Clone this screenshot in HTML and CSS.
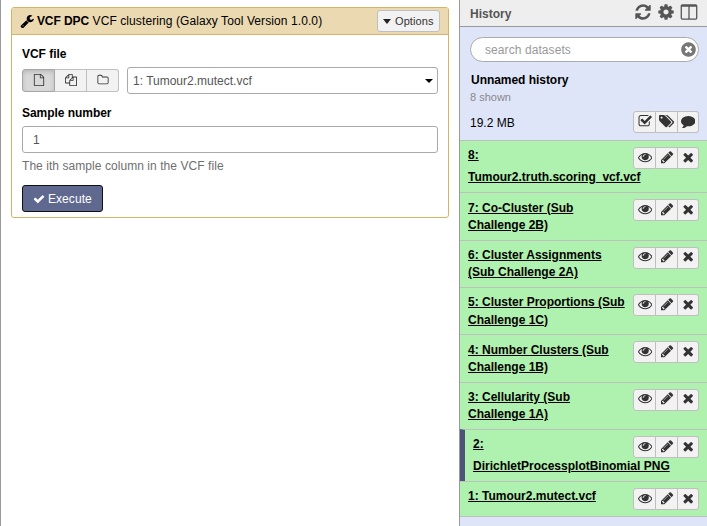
FILE: index.html
```
<!DOCTYPE html>
<html lang="en">
<head>
<meta charset="utf-8">
<title>Galaxy</title>
<link rel="stylesheet" href="styles.css">
</head>
<body>
<svg class="sprite" aria-hidden="true">
<symbol id="wrench" viewBox="0 0 1792 1792"><path d="M448 1472q0-26-19-45t-45-19-45 19-19 45 19 45 45 19 45-19 19-45zm644-420l-682 682q-37 37-90 37-52 0-91-37l-106-108q-38-36-38-90 0-53 38-91l681-681q39 98 114.500 173.500t173.500 114.500zm634-435q0 39-23 106-47 134-164.500 217.500t-258.500 83.500q-185 0-316.500-131.500t-131.500-316.500 131.500-316.500 316.500-131.500q58 0 121.500 16.500t107.500 46.500q16 11 16 28t-16 28l-293 169v224l193 107q5-3 79-48.500t135.500-81 70.500-35.500q15 0 23.500 10t8.500 25z"/></symbol>
<symbol id="check" viewBox="0 0 1792 1792"><path d="M1671 566q0 40-28 68l-724 724-136 136q-28 28-68 28t-68-28l-136-136-362-362q-28-28-28-68t28-68l136-136q28-28 68-28t68 28l294 295 656-657q28-28 68-28t68 28l136 136q28 28 28 68z"/></symbol>
<symbol id="times" viewBox="0 0 1792 1792"><path d="M1490 1322q0 40-28 68l-136 136q-28 28-68 28t-68-28l-294-294-294 294q-28 28-68 28t-68-28l-136-136q-28-28-28-68t28-68l294-294-294-294q-28-28-28-68t28-68l136-136q28-28 68-28t68 28l294 294 294-294q28-28 68-28t68 28l136 136q28 28 28 68t-28 68l-294 294 294 294q28 28 28 68z"/></symbol>
<symbol id="eye" viewBox="0 0 1792 1792"><path d="M1664 960q-152-236-381-353 61 104 61 225 0 185-131.500 316.500t-316.500 131.500-316.500-131.500-131.500-316.500q0-121 61-225-229 117-381 353 133 205 333.500 326.500t434.500 121.500 434.500-121.500 333.500-326.500zm-720-384q0-20-14-34t-34-14q-125 0-214.500 89.500t-89.500 214.500q0 20 14 34t34 14 34-14 14-34q0-86 61-147t147-61q20 0 34-14t14-34zm848 384q0 34-20 69-140 230-376.500 368.500t-499.500 138.500-499.500-139-376.500-368q-20-35-20-69t20-69q140-229 376.500-368t499.500-139 499.500 139 376.500 368q20 35 20 69z"/></symbol>
<symbol id="pencil" viewBox="0 0 1792 1792"><path d="M491 1536l91-91-235-235-91 91v107h128v128h107zm523-928q0-22-22-22-10 0-17 7l-542 542q-7 7-7 17 0 22 22 22 10 0 17-7l542-542q7-7 7-17zm-54-192l416 416-832 832h-416v-416zm683 96q0 53-37 90l-166 166-416-416 166-165q36-38 90-38 53 0 91 38l235 234q37 39 37 91z"/></symbol>
<symbol id="comment" viewBox="0 0 1792 1792"><path d="M1792 896q0 174-120 321.500t-326 233-450 85.500q-70 0-145-8-198 175-460 242-49 14-114 22-17 2-30.500-9t-17.500-29v-1q-3-4-.5-12t2-10 4.500-9.500l6-9 7-8.500 8-9q7-8 31-34.500t34.500-38 31-39.500 32.500-51 27-59 26-76q-157-89-247.500-220t-90.500-281q0-130 71-248.500t191-204.500 286-136.500 348-50.500q244 0 450 85.500t326 233 120 321.500z"/></symbol>
<symbol id="refresh" viewBox="0 0 1792 1792"><path d="M1639 1056q0 5-1 7-64 268-268 434.500t-478 166.500q-146 0-282.500-55t-243.500-157l-129 129q-19 19-45 19t-45-19-19-45v-448q0-26 19-45t45-19h448q26 0 45 19t19 45-19 45l-137 137q71 66 161 102t187 36q134 0 250-65t186-179q11-17 53-117 8-23 30-23h192q13 0 22.500 9.500t9.500 22.500zm25-800v448q0 26-19 45t-45 19h-448q-26 0-45-19t-19-45 19-45l138-138q-148-137-349-137-134 0-250 65t-186 179q-11 17-53 117-8 23-30 23h-199q-13 0-22.500-9.500t-9.500-22.500v-7q65-268 270-434.500t480-166.500q146 0 284 55.500t245 156.500l130-129q19-19 45-19t45 19 19 45z"/></symbol>
<symbol id="cog" viewBox="0 0 1792 1792"><path d="M1152 896q0-106-75-181t-181-75-181 75-75 181 75 181 181 75 181-75 75-181zm512-109v222q0 12-8 23t-20 13l-185 28q-19 54-39 91 35 50 107 138 10 12 10 25t-9 23q-27 37-99 108t-94 71q-12 0-26-9l-138-108q-44 23-91 38-16 136-29 186-7 28-36 28h-222q-14 0-24.500-8.500t-11.500-21.500l-28-184q-49-16-90-37l-141 107q-10 9-25 9-14 0-25-11-126-114-165-168-7-10-7-23 0-12 8-23 15-21 51-66.500t54-70.500q-27-50-41-99l-183-27q-13-2-21-12.500t-8-23.500v-222q0-12 8-23t19-13l186-28q14-46 39-92-40-57-107-138-10-12-10-24 0-10 9-23 26-36 98.500-107.500t94.500-71.500q13 0 26 10l138 107q44-23 91-38 16-136 29-186 7-28 36-28h222q14 0 24.500 8.500t11.500 21.500l28 184q49 16 90 37l142-107q9-9 24-9 13 0 25 10 129 119 165 170 7 8 7 22 0 12-8 23-15 21-51 66.500t-54 70.500q26 50 41 98l183 28q13 2 21 12.500t8 23.500z"/></symbol>
<symbol id="columns" viewBox="0 0 1792 1792"><path d="M224 1536h608v-1152h-640v1120q0 13 9.500 22.500t22.500 9.500zm1376-32v-1120h-640v1152h608q13 0 22.500-9.500t9.500-22.500zm128-1216v1216q0 66-47 113t-113 47h-1344q-66 0-113-47t-47-113v-1216q0-66 47-113t113-47h1344q66 0 113 47t47 113z"/></symbol>
<symbol id="times-circle" viewBox="0 0 1792 1792"><path d="M1277 1122q0-26-19-45l-181-181 181-181q19-19 19-45 0-27-19-46l-90-90q-19-19-46-19-26 0-45 19l-181 181-181-181q-19-19-45-19-27 0-46 19l-90 90q-19 19-19 46 0 26 19 45l181 181-181 181q-19 19-19 45 0 27 19 46l90 90q19 19 46 19 26 0 45-19l181-181 181 181q19 19 45 19 27 0 46-19l90-90q19-19 19-46zm387-226q0 209-103 385.500t-279.500 279.500-385.500 103-385.500-103-279.500-279.500-103-385.500 103-385.500 279.500-279.500 385.500-103 385.500 103 279.500 279.500 103 385.500z"/></symbol>
<symbol id="check-square" viewBox="0 0 1792 1792"><path d="M1472 930v318q0 119-84.500 203.500t-203.500 84.500h-832q-119 0-203.500-84.500t-84.500-203.500v-832q0-119 84.500-203.500t203.500-84.500h832q63 0 117 25 15 7 18 23 3 17-9 29l-49 49q-10 10-23 10-3 0-9-2-23-6-45-6h-832q-66 0-113 47t-47 113v832q0 66 47 113t113 47h832q66 0 113-47t47-113v-254q0-13 9-22l64-64q10-10 23-10 6 0 12 3 20 8 20 29zm231-489l-814 814q-24 24-57 24t-57-24l-430-430q-24-24-24-57t24-57l110-110q24-24 57-24t57 24l263 263 647-647q24-24 57-24t57 24l110 110q24 24 24 57t-24 57z"/></symbol>
<symbol id="tags" viewBox="0 0 1920 1792"><path d="M448 448q0-53-37.500-90.500t-90.500-37.500-90.500 37.500-37.500 90.500 37.500 90.500 90.500 37.500 90.500-37.500 37.500-90.500zm1067 576q0 53-37 90l-491 492q-39 37-91 37-53 0-90-37l-715-716q-38-37-64.500-101t-26.500-117v-416q0-52 38-90t90-38h416q53 0 117 26.500t102 64.500l715 714q37 39 37 91zm384 0q0 53-37 90l-491 492q-39 37-91 37-36 0-59-14t-53-45l470-470q37-37 37-90 0-52-37-91l-715-714q-38-38-102-64.500t-117-26.500h224q53 0 117 26.500t102 64.500l715 714q37 39 37 91z"/></symbol>
<symbol id="file" viewBox="0 0 1792 1792"><path d="M1596 380q28 28 48 76t20 88v1152q0 40-28 68t-68 28h-1344q-40 0-68-28t-28-68v-1600q0-40 28-68t68-28h896q40 0 88 20t76 48zm-444-244v376h376q-10-29-22-41l-313-313q-12-12-41-22zm384 1528v-1024h-416q-40 0-68-28t-28-68v-416h-768v1536h1280z"/></symbol>
<symbol id="files" viewBox="0 0 1792 1792"><path d="M1696 384q40 0 68 28t28 68v1216q0 40-28 68t-68 28h-960q-40 0-68-28t-28-68v-288h-544q-40 0-68-28t-28-68v-672q0-40 20-88t48-76l408-408q28-28 76-48t88-20h416q40 0 68 28t28 68v328q68-40 128-40h416zm-544 213l-299 299h299v-299zm-640-384l-299 299h299v-299zm196 647l316-316v-416h-384v416q0 40-28 68t-68 28h-416v640h512v-256q0-40 20-88t48-76zm956 804v-1152h-384v416q0 40-28 68t-68 28h-416v640h896z"/></symbol>
<symbol id="folder" viewBox="0 0 1792 1792"><path d="M1600 1312v-704q0-40-28-68t-68-28h-704q-40 0-68-28t-28-68v-64q0-40-28-68t-68-28h-320q-40 0-68 28t-28 68v960q0 40 28 68t68 28h1216q40 0 68-28t28-68zm128-704v704q0 92-66 158t-158 66h-1216q-92 0-158-66t-66-158v-960q0-92 66-158t158-66h320q92 0 158 66t66 158v32h672q92 0 158 66t66 158z"/></symbol>
</svg>
<div class="page">
  <main class="center">
    <section class="tool">
      <header class="tool-head">
        <svg class="icon wrench"><use href="#wrench"/></svg>
        <h1><b>VCF DPC</b> VCF clustering (Galaxy Tool Version 1.0.0)</h1>
        <button class="options"><span class="caret"></span>Options</button>
      </header>
      <div class="tool-body">
        <label class="label">VCF file</label>
        <div class="file-row">
          <div class="switch">
            <button class="on"><svg class="icon"><use href="#file"/></svg></button>
            <button><svg class="icon"><use href="#files"/></svg></button>
            <button><svg class="icon"><use href="#folder"/></svg></button>
          </div>
          <div class="field select"><span>1: Tumour2.mutect.vcf</span><span class="caret small"></span></div>
        </div>
        <label class="label second">Sample number</label>
        <div class="field number">1</div>
        <p class="help">The ith sample column in the VCF file</p>
        <button class="execute"><svg class="icon"><use href="#check"/></svg>Execute</button>
      </div>
    </section>
  </main>
  <aside class="history">
    <header class="history-head">
      <h2>History</h2>
      <svg class="icon"><use href="#refresh"/></svg>
      <svg class="icon"><use href="#cog"/></svg>
      <svg class="icon"><use href="#columns"/></svg>
    </header>
    <div class="controls">
      <div class="search"><span>search datasets</span><svg class="icon"><use href="#times-circle"/></svg></div>
      <h3>Unnamed history</h3>
      <p class="shown">8 shown</p>
      <div class="size-row">
        <span>19.2 MB</span>
        <div class="actions"><button><svg class="icon"><use href="#check-square"/></svg></button><button><svg class="icon tags"><use href="#tags"/></svg></button><button><svg class="icon"><use href="#comment"/></svg></button></div>
      </div>
    </div>
    <ul class="datasets">
      <li><div class="actions"><button><svg class="icon"><use href="#eye"/></svg></button><button><svg class="icon"><use href="#pencil"/></svg></button><button><svg class="icon"><use href="#times"/></svg></button></div><a>8: Tumour2.truth.scoring_vcf.vcf</a></li>
      <li class="two-line"><div class="actions"><button><svg class="icon"><use href="#eye"/></svg></button><button><svg class="icon"><use href="#pencil"/></svg></button><button><svg class="icon"><use href="#times"/></svg></button></div><a>7: Co-Cluster (Sub Challenge 2B)</a></li>
      <li class="two-line"><div class="actions"><button><svg class="icon"><use href="#eye"/></svg></button><button><svg class="icon"><use href="#pencil"/></svg></button><button><svg class="icon"><use href="#times"/></svg></button></div><a>6: Cluster Assignments (Sub Challenge 2A)</a></li>
      <li class="two-line"><div class="actions"><button><svg class="icon"><use href="#eye"/></svg></button><button><svg class="icon"><use href="#pencil"/></svg></button><button><svg class="icon"><use href="#times"/></svg></button></div><a>5: Cluster Proportions (Sub Challenge 1C)</a></li>
      <li class="two-line"><div class="actions"><button><svg class="icon"><use href="#eye"/></svg></button><button><svg class="icon"><use href="#pencil"/></svg></button><button><svg class="icon"><use href="#times"/></svg></button></div><a>4: Number Clusters (Sub Challenge 1B)</a></li>
      <li class="two-line"><div class="actions"><button><svg class="icon"><use href="#eye"/></svg></button><button><svg class="icon"><use href="#pencil"/></svg></button><button><svg class="icon"><use href="#times"/></svg></button></div><a>3: Cellularity (Sub Challenge 1A)</a></li>
      <li class="current"><div class="actions"><button><svg class="icon"><use href="#eye"/></svg></button><button><svg class="icon"><use href="#pencil"/></svg></button><button><svg class="icon"><use href="#times"/></svg></button></div><a>2: DirichletProcessplotBinomial PNG</a></li>
      <li><div class="actions"><button><svg class="icon"><use href="#eye"/></svg></button><button><svg class="icon"><use href="#pencil"/></svg></button><button><svg class="icon"><use href="#times"/></svg></button></div><a>1: Tumour2.mutect.vcf</a></li>
    </ul>
  </aside>
</div>
</body>
</html>
```
FILE: styles.css
```
* { box-sizing: border-box; }
body, h1, h2, h3, p, ul { margin: 0; padding: 0; }
body {
  font: 12px/17.14px "Liberation Sans", Arial, sans-serif;
  color: #000;
  background: #fff;
  overflow: hidden;
}
button { font: inherit; margin: 0; padding: 0; }
.sprite { display: none; }
.icon { display: block; width: 14.4px; height: 14.4px; fill: currentColor; flex: none; }

.page { display: flex; height: 526px; border-left: 1px solid #999; }
.center { flex: 1; padding: 7px 10px; }

.tool { border: 1px solid #d8b365; border-radius: 3px; height: 211px; }
.tool-head {
  display: flex;
  align-items: center;
  height: 27px;
  padding: 0 8px;
  background: #ebd9b2;
  border-bottom: 1px solid #d8b365;
}
.tool-head .wrench { width: 14.4px; height: 14.4px; margin-right: 2.5px; }
.tool-head h1 { flex: 1; padding-top: 1px; font-size: 12px; font-weight: normal; letter-spacing: .09px; }
.tool-head b { letter-spacing: -.06px; }
.options {
  display: flex;
  align-items: center;
  width: 63px;
  height: 22px;
  padding: 1px 0 0 5px;
  font-size: 11px;
  letter-spacing: .08px;
  color: #333;
  background: #f2f2f2;
  border: 1px solid #bfbfbf;
  border-radius: 3px;
}
.caret {
  border: solid transparent;
  border-width: 5px 4.5px 0;
  border-top-color: #222;
  margin-right: 4px;
}
.caret.small { border-width: 4px 4px 0; border-top-color: #000; margin: 0; }

.tool-body { padding: 11px 10px 10px; }
.label { display: block; font-weight: bold; letter-spacing: -.04px; }
.second { margin-top: 11.5px; }
.file-row { display: flex; align-items: center; gap: 8px; margin-top: 3.5px; }
.switch { display: flex; width: 97px; height: 23px; }
.switch button {
  flex: 1;
  display: flex;
  align-items: center;
  justify-content: center;
  color: #333;
  background: #f2f2f2;
  border: 1px solid #bfbfbf;
  border-left-width: 0;
}
.switch button:last-child { border-radius: 0 3px 3px 0; }
.switch .on {
  background: #d9d9d9;
  border: 1px solid #a6a6a6;
  border-radius: 3px 0 0 3px;
  box-shadow: inset 0 2px 4px rgba(0, 0, 0, .15);
}
.switch .icon { width: 12px; height: 12px; }
.field {
  display: flex;
  align-items: center;
  height: 27px;
  color: #555;
  background: #fff;
  border: 1px solid #aaa;
  border-radius: 3px;
}
.select { flex: 1; justify-content: space-between; padding: 1px 4px 0 5px; }
.select span:first-child { padding-top: 1px; }
.number { margin-top: 4px; padding: 1px 10px 0; }
.help { margin-top: 5px; color: #6f6f6f; letter-spacing: .06px; }
.execute {
  display: flex;
  align-items: center;
  gap: 3px;
  width: 81px;
  height: 27px;
  margin-top: 10px;
  padding: 1px 0 0 10px;
  color: #fff;
  background: #5f6990;
  border: 1px solid #111;
  border-radius: 3px;
  letter-spacing: .06px;
}
.execute .icon { width: 12px; height: 12px; }

.history { width: 248px; background: #dfe5f9; border-left: 1px solid #999; }
.history-head {
  display: flex;
  align-items: center;
  gap: 5px;
  height: 27px;
  padding: 0 9px 0 10px;
  color: #555;
  background: #eee;
  border-bottom: 1px solid #999;
}
.history-head h2 { flex: 1; padding-top: 3px; font-size: 12px; }
.history-head .icon { width: 18px; height: 18px; margin-top: -3px; }
.controls { height: 113px; padding: 10px 8px 0 10px; }
.search {
  display: flex;
  align-items: center;
  justify-content: space-between;
  height: 25px;
  padding: 1px 1px 0 14px;
  color: #999;
  background: #fff;
  border: 1px solid #aaa;
  border-radius: 13px;
  letter-spacing: .08px;
}
.search span { padding-top: 1px; }
.search .icon { width: 17px; height: 17px; margin-top: -1px; color: #777; }
.controls h3 { margin: 10px 0 0 1px; font-size: 12px; letter-spacing: -.04px; }
.shown { font-size: 11px; color: #888; }
.size-row { display: flex; justify-content: space-between; margin-top: 5px; }
.size-row > span { padding-top: 4px; }

.actions { display: flex; width: 66px; height: 22px; }
.actions button {
  flex: 1 1 0;
  display: flex;
  align-items: center;
  justify-content: center;
  padding: 0 0 2px 1px;
  color: #333;
  background: #f2f2f2;
  border: 1px solid #bfbfbf;
  border-left-width: 0;
}
.actions button:first-child { flex: 0 0 23px; border-left-width: 1px; border-radius: 3px 0 0 3px; }
.actions button:last-child { border-radius: 0 3px 3px 0; }
.actions .tags { width: 15.4px; }

.datasets { list-style: none; border-bottom: 1px solid #bfbfbf; }
.datasets li {
  display: flow-root;
  padding: 6px 8px;
  background: #aff1af;
  border-top: 1px solid #bfbfbf;
}
.datasets .two-line { padding: 6.59px 8px 5.5px; }
.datasets .actions { float: right; margin-left: 8px; }
.two-line .actions { margin-top: -.5px; }
.datasets a { font-weight: bold; text-decoration: underline; }
.datasets .current { border-left: 5px solid #4c5578; }
```
